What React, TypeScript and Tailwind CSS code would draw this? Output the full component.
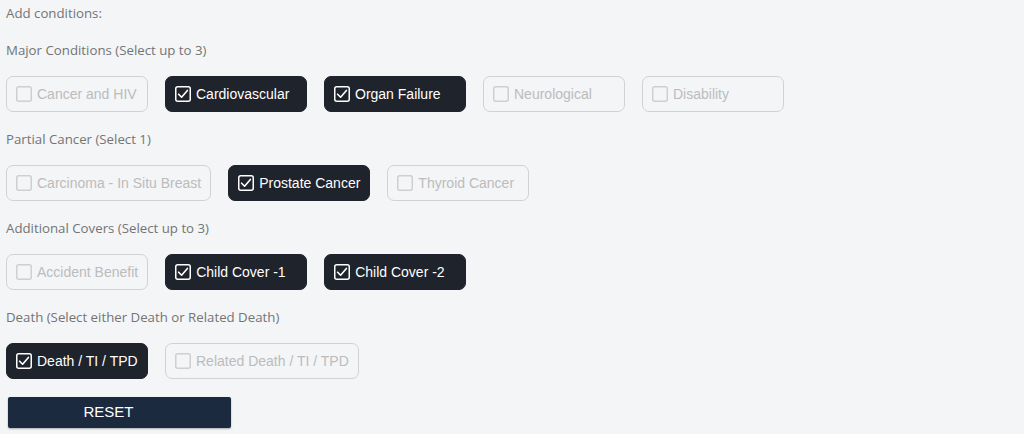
import React, { useState } from "react";

type Group = {
  label: string;
  options: string[];
};

const groups: Group[] = [
  {
    label: "Major Conditions (Select up to 3)",
    options: ["Cancer and HIV", "Cardiovascular", "Organ Failure", "Neurological", "Disability"],
  },
  {
    label: "Partial Cancer (Select 1)",
    options: ["Carcinoma - In Situ Breast", "Prostate Cancer", "Thyroid Cancer"],
  },
  {
    label: "Additional Covers (Select up to 3)",
    options: ["Accident Benefit", "Child Cover -1", "Child Cover -2"],
  },
  {
    label: "Death (Select either Death or Related Death)",
    options: ["Death / TI / TPD", "Related Death / TI / TPD"],
  },
];

const initial = ["Cardiovascular", "Organ Failure", "Prostate Cancer", "Child Cover -1", "Child Cover -2", "Death / TI / TPD"];

function CheckBox({ checked }: { checked: boolean }) {
  return (
    <svg width="16" height="16" viewBox="0 0 16 16" fill="none" className="shrink-0">
      <rect
        x="0.75"
        y="0.75"
        width="14.5"
        height="14.5"
        rx="2"
        stroke={checked ? "#ffffff" : "#cfcfcf"}
        strokeWidth="1.5"
      />
      {checked && (
        <path d="M3.6 8.2 L6.6 11.2 L12.4 4.4" stroke="#ffffff" strokeWidth="1.6" strokeLinecap="round" strokeLinejoin="round" />
      )}
    </svg>
  );
}

export default function App() {
  const [selected, setSelected] = useState<string[]>(initial);

  const toggle = (opt: string) => {
    setSelected((s) => (s.includes(opt) ? s.filter((x) => x !== opt) : [...s, opt]));
  };

  return (
    <div className="min-h-[434px] w-[1024px] bg-[#f3f5f7] pl-[6px] pt-[3px] font-['Open_Sans',sans-serif]">
      <div className="h-5 text-[13.25px] leading-5 text-[#747474]">Add conditions:</div>

      {groups.map((group) => (
        <div key={group.label} className="mt-[17px]">
          <div className="h-5 text-[13.25px] leading-5 text-[#747474]">{group.label}</div>
          <div className="mt-4 flex gap-[17px]">
            {group.options.map((opt) => {
              const on = selected.includes(opt);
              return (
                <button
                  key={opt}
                  onClick={() => toggle(opt)}
                  className={
                    on
                      ? "flex h-9 min-w-[142px] items-center gap-[5px] rounded-[7px] border border-[#1f232b] bg-[#1f232b] px-[9px] font-['Liberation_Sans',Arial,sans-serif] text-[14px] text-white"
                      : "flex h-9 min-w-[142px] items-center gap-[5px] rounded-[7px] border border-[#d2d2d2] bg-transparent px-[9px] font-['Liberation_Sans',Arial,sans-serif] text-[14px] text-[#bcbcbc]"
                  }
                >
                  <CheckBox checked={on} />
                  <span className="whitespace-nowrap">{opt}</span>
                </button>
              );
            })}
          </div>
        </div>
      ))}

      <button
        onClick={() => setSelected([])}
        className="ml-[2px] mt-[18px] h-[31px] w-[223px] rounded-[2px] bg-[#1b2a3f] pr-[22px] font-['Liberation_Sans',Arial,sans-serif] text-[15px] text-white shadow-[0_1px_2px_rgba(0,0,0,0.3)]"
      >
        RESET
      </button>
    </div>
  );
}
